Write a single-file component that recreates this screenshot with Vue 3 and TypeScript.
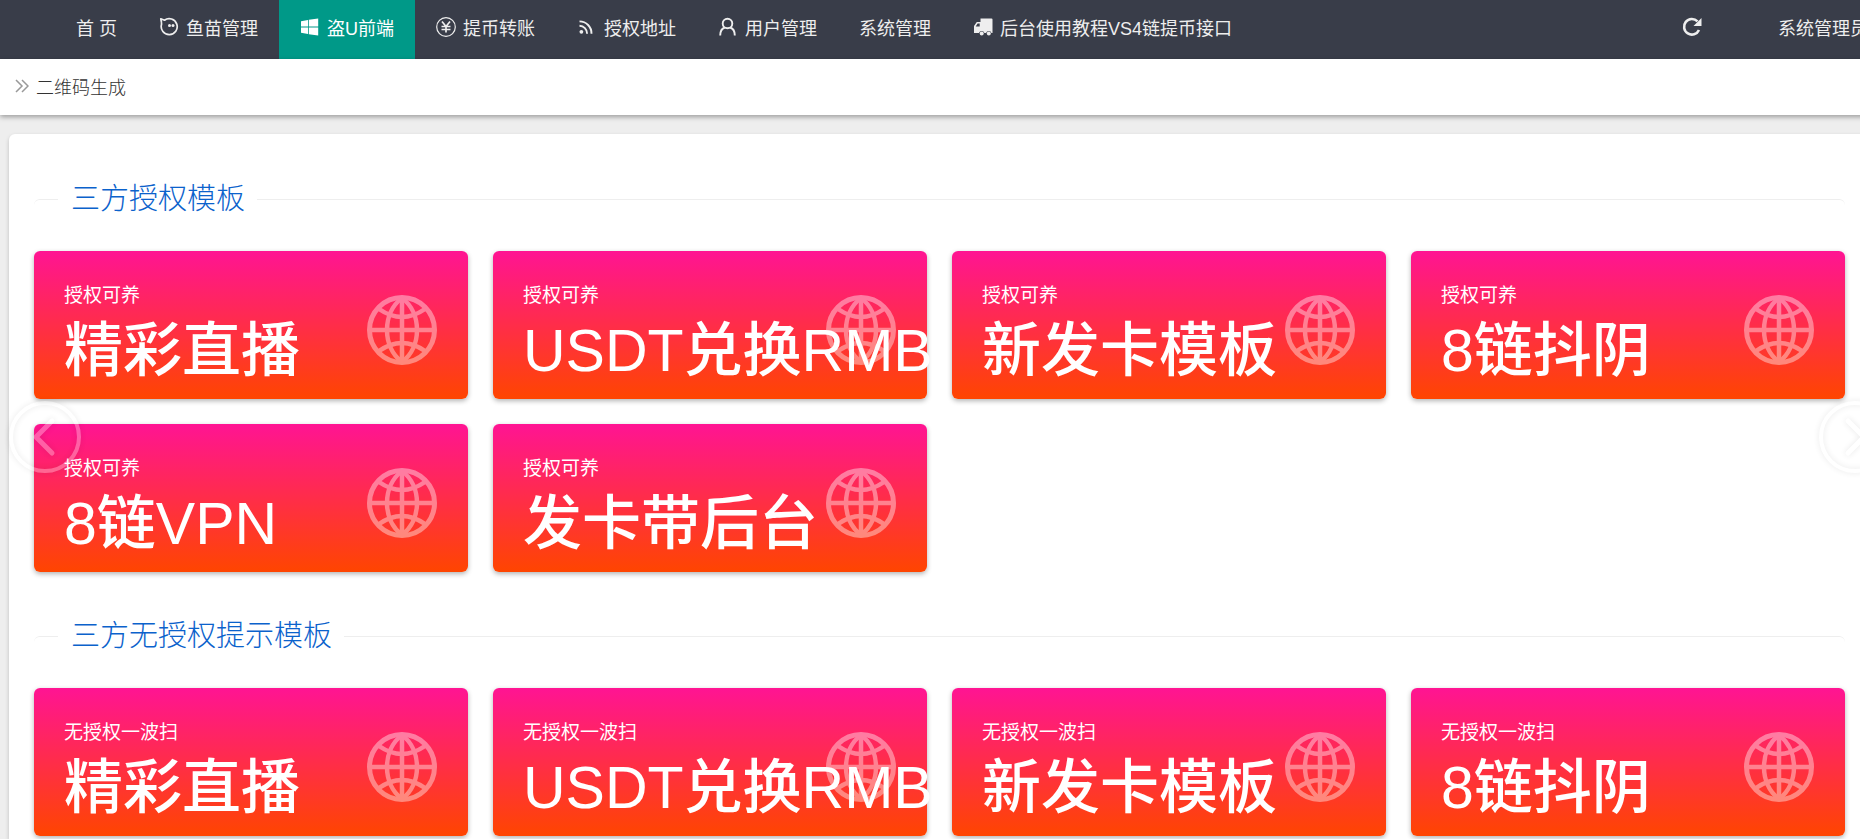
<script setup lang="ts">
interface NavItem {
  label: string
  icon?: 'face' | 'windows' | 'yen' | 'rss' | 'user' | 'truck'
  active?: boolean
}

interface Section {
  title: string
  note: string
  cards: string[]
}

const navItems: NavItem[] = [
  { label: '首 页' },
  { label: '鱼苗管理', icon: 'face' },
  { label: '盗U前端', icon: 'windows', active: true },
  { label: '提币转账', icon: 'yen' },
  { label: '授权地址', icon: 'rss' },
  { label: '用户管理', icon: 'user' },
  { label: '系统管理' },
  { label: '后台使用教程VS4链提币接口', icon: 'truck' },
]

const sections: Section[] = [
  {
    title: '三方授权模板',
    note: '授权可养',
    cards: ['精彩直播', 'USDT兑换RMB', '新发卡模板', '8链抖阴', '8链VPN', '发卡带后台'],
  },
  {
    title: '三方无授权提示模板',
    note: '无授权一波扫',
    cards: ['精彩直播', 'USDT兑换RMB', '新发卡模板', '8链抖阴'],
  },
]
</script>

<template>
  <div class="viewport">
    <div class="page">
      <header class="topbar">
        <nav class="menu">
          <a v-for="item in navItems" :key="item.label" href="#" class="menu-item" :class="{ active: item.active }">
            <svg v-if="item.icon" class="menu-icon" viewBox="0 0 20 20" aria-hidden="true">
              <g v-if="item.icon === 'face'" fill="none" stroke="currentColor" stroke-width="1.7">
                <path d="M2.500 5.500 1.800 1.800 5.500 3.200A8 8 0 1 1 2.500 7.500V5.500" stroke-linejoin="round" />
                <circle cx="10.500" cy="8.600" r="1.500" fill="currentColor" stroke="none" />
                <circle cx="14" cy="8.600" r="1.500" fill="currentColor" stroke="none" />
              </g>
              <path
                v-else-if="item.icon === 'windows'"
                fill="currentColor"
                d="M1 4.2 8 3v6.6H1zM8.8 2.8 18.200 1.400v8.200H8.800zM1 10.400h7V17l-7-1.200zM8.800 10.400h9.400v8.200l-9.400-1.400z"
              />
              <g v-else-if="item.icon === 'yen'" fill="none" stroke="currentColor">
                <circle cx="10" cy="10" r="9.300" stroke-width="1.200" />
                <path d="m6 4.500 4 5 4-5M10 9.500V15.500M5.500 9.500h9M5.500 12.500h9" stroke-width="1.700" />
              </g>
              <g v-else-if="item.icon === 'rss'" fill="none" stroke="currentColor" stroke-width="1.900">
                <circle cx="4.400" cy="14.800" r="1.900" fill="currentColor" stroke="none" />
                <path d="M2.500 8.700a8 8 0 0 1 7.600 8M2.500 4.400a12 12 0 0 1 12 12.300" />
              </g>
              <g v-else-if="item.icon === 'user'" fill="none" stroke="currentColor" stroke-width="1.900">
                <circle cx="9.500" cy="6.500" r="4.800" />
                <path d="M2.200 18.500c0-4 1.600-7 4.600-8M16.800 18.500c0-4-1.600-7-4.600-8" />
              </g>
              <g v-else fill="currentColor">
                <path d="M7.500 1.500h11q1 0 1 1V16h-1a2.800 2.800 0 0 0-5.400 0h-1.700a2.800 2.800 0 0 0-5.400 0H1V9l2.800-4h3.700zM2.700 9.500h4V6.600H4.600z" fill-rule="evenodd" />
                <circle cx="8.700" cy="16.600" r="2" />
                <circle cx="15.800" cy="16.600" r="2" />
              </g>
            </svg>
            <span>{{ item.label }}</span>
          </a>
        </nav>
        <div class="account">
          <button class="refresh" type="button" aria-label="刷新">
            <svg viewBox="0 0 20 20" aria-hidden="true">
              <path d="M17 13A7.800 7.800 0 1 1 15.500 4.400" fill="none" stroke="currentColor" stroke-width="2.600" />
              <path d="M19.500 1v8h-8z" fill="currentColor" />
            </svg>
          </button>
          <a href="#" class="account-name">系统管理员</a>
        </div>
      </header>

      <div class="crumb">
        <svg class="crumb-icon" viewBox="0 0 14 14" aria-hidden="true">
          <path d="m1 1 6 6-6 6M7 1l6 6-6 6" fill="none" stroke="currentColor" stroke-width="1.500" />
        </svg>
        <span>二维码生成</span>
      </div>

      <main class="panel">
        <fieldset v-for="section in sections" :key="section.title" class="section">
          <legend>{{ section.title }}</legend>
          <div class="cards">
            <a v-for="name in section.cards" :key="name" href="#" class="card">
              <span class="card-note">{{ section.note }}</span>
              <strong class="card-name">{{ name }}</strong>
              <svg class="globe" viewBox="0 0 70 70" aria-hidden="true">
                <g fill="none" stroke="#fff" stroke-width="4.500">
                  <circle cx="35" cy="35" r="32.500" stroke-width="5" />
                  <path d="M35 3v64M3 35h64" />
                  <path d="M35 3C15 18 15 52 35 67M35 3C55 18 55 52 35 67" />
                  <path d="M12 14Q35 30 58 14M12 56Q35 40 58 56" />
                </g>
              </svg>
            </a>
          </div>
        </fieldset>
      </main>
    </div>

    <button class="arrow prev" type="button" aria-label="上一页">
      <svg viewBox="0 0 72 72" aria-hidden="true">
        <g fill="none" stroke="#fff">
          <circle cx="36" cy="36" r="34" stroke-width="4" />
          <path d="M43 20 27 36l16 16" stroke-width="5" stroke-linecap="round" stroke-linejoin="round" />
        </g>
      </svg>
    </button>
    <button class="arrow next" type="button" aria-label="下一页">
      <svg viewBox="0 0 72 72" aria-hidden="true">
        <g fill="none" stroke="#fff">
          <circle cx="36" cy="36" r="34" stroke-width="4" />
          <path d="m29 20 16 16-16 16" stroke-width="5" stroke-linecap="round" stroke-linejoin="round" />
        </g>
      </svg>
    </button>
  </div>
</template>

<style>
body {
  margin: 0;
  background: #eee;
}
</style>

<style scoped>
* {
  box-sizing: border-box;
}

.viewport {
  position: relative;
  overflow: hidden;
  min-height: 100vh;
  display: flex;
  background: #eee;
  color: #333;
  font-family: "Liberation Sans", "Noto Sans CJK SC", sans-serif;
  font-size: 18px;
}

.page {
  flex: 1;
  min-width: 0;
  margin-right: -10px;
  display: flex;
  flex-direction: column;
}

a {
  color: inherit;
  text-decoration: none;
}

button {
  padding: 0;
  border: 0;
  background: none;
  color: inherit;
  cursor: pointer;
}

svg {
  display: block;
}

.topbar {
  display: flex;
  justify-content: space-between;
  height: 59px;
  padding-left: 55px;
  background: #393d49;
  color: #eee;
  white-space: nowrap;
}

.menu,
.account {
  display: flex;
}

.menu-item,
.account {
  display: flex;
  align-items: center;
  padding-bottom: 6px;
}

.menu-item {
  padding-left: 21px;
  padding-right: 21px;
}

.menu-item.active {
  background: #009988;
  color: #fff;
}

.menu-icon {
  width: 20px;
  height: 20px;
  margin-right: 7px;
}

.refresh svg {
  width: 20px;
  height: 20px;
}

.account {
  gap: 76px;
  padding-right: 2px;
}

.crumb {
  display: flex;
  align-items: center;
  gap: 7px;
  height: 56px;
  padding: 0 15px 2px;
  background: #fff;
  box-shadow: 0 2px 5px rgba(0, 0, 0, 0.35);
  font-weight: 300;
}

.crumb-icon {
  width: 14px;
  height: 14px;
  color: #999;
}

.panel {
  flex: 1;
  margin: 19px 0 0 9px;
  padding: 45px 25px 0;
  border-radius: 6px 6px 0 0;
  background: #fff;
  box-shadow: 0 2px 4px rgba(0, 0, 0, 0.2);
}

.section {
  min-width: 0;
  margin: 0 0 44px;
  padding: 32px 0 0;
  border: 0 solid #eee;
  border-top-width: 1px;
  border-radius: 6px;
}

.section:last-child {
  margin-bottom: 2px;
}

.section legend {
  margin-left: 24px;
  padding: 0 12px 0 13px;
  color: #0b62cc;
  font-size: 29px;
  font-weight: 300;
  line-height: 40px;
}

.cards {
  display: grid;
  grid-template-columns: repeat(4, minmax(0, 1fr));
  gap: 25px;
}

.card {
  position: relative;
  height: 148px;
  padding: 31px 30px 0;
  border-radius: 6px;
  background: linear-gradient(#ff1493, #ff4500);
  box-shadow: 0 2px 5px rgba(0, 0, 0, 0.3);
  color: #fff;
  white-space: nowrap;
}

.card-note,
.card-name {
  display: block;
}

.card-note {
  font-size: 19px;
  line-height: 28px;
}

.card-name {
  margin-top: 5px;
  font-size: 59px;
  font-weight: 500;
  line-height: 72px;
}

.globe {
  position: absolute;
  top: 44px;
  right: 31px;
  width: 70px;
  height: 70px;
  opacity: 0.4;
}

.arrow {
  position: absolute;
  top: 401px;
  width: 72px;
  height: 72px;
  opacity: 0.3;
  filter: drop-shadow(0 0 3px rgba(0, 0, 0, 0.3));
}

.prev {
  left: 9px;
}

.next {
  right: -31px;
}
</style>
